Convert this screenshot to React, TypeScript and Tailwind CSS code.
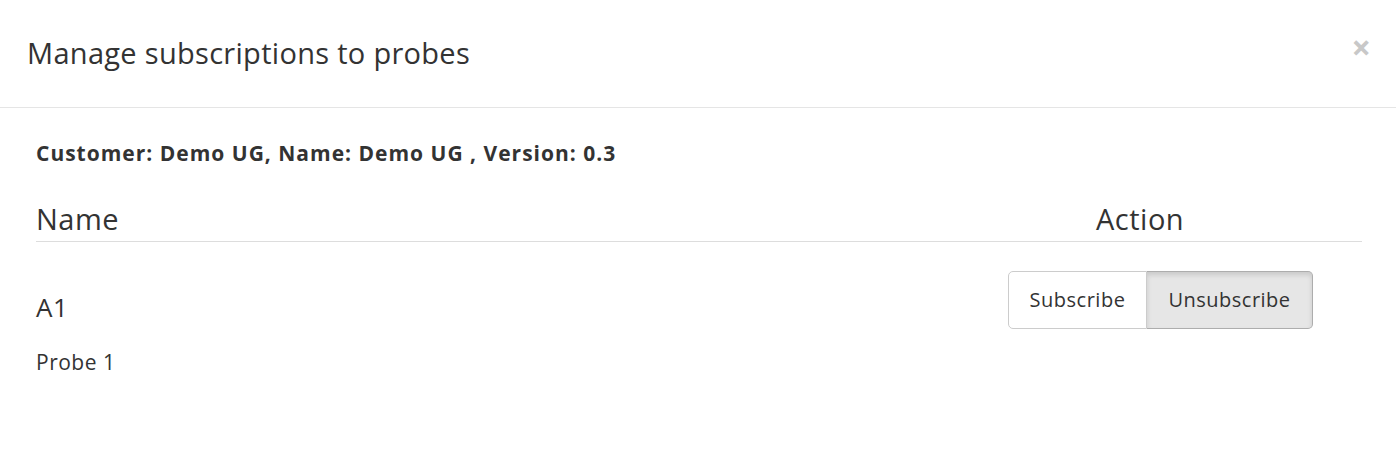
export default function App() {
  return (
    <div className="w-[1396px] h-[456px] bg-white text-[#333] font-['Open_Sans',sans-serif]">
      <div className="h-[108px] border-b border-[#e5e5e5] flex items-center justify-between pl-[27px] pr-[25px]">
        <h4 className="text-[29px] font-normal tracking-[0.3px] text-[#333] leading-none pb-[2px]">Manage subscriptions to probes</h4>
        <span className="text-[34px] font-bold text-[#c8c8c8] leading-none pb-[14px]">×</span>
      </div>
      <div className="pl-[36px] pr-[34px] pt-[35px]">
        <div className="text-[21px] font-bold tracking-[1px] leading-none text-[#333]">Customer: Demo UG, Name: Demo UG , Version: 0.3</div>
        <div className="mt-[40px] flex items-end border-b border-[#ddd] pb-[8px]">
          <div className="flex-1 text-[29px] font-normal tracking-[0.5px] leading-none">Name</div>
          <div className="w-[266px] text-[29px] font-normal tracking-[0.5px] leading-none">Action</div>
        </div>
        <div className="flex items-start pt-[29px]">
          <div className="flex-1">
            <div className="mt-[23px] text-[26px] font-normal tracking-[0.5px] leading-none">A1</div>
            <div className="mt-[32px] text-[21px] tracking-[0.5px] leading-none">Probe 1</div>
          </div>
          <div className="mr-[49px] flex font-['Open_Sans',sans-serif] text-[20px] tracking-[0.5px]">
            <button className="h-[58px] w-[139px] border border-[#ccc] rounded-l-[5px] bg-white text-[#333]">Subscribe</button>
            <button className="h-[58px] w-[166px] border border-l-0 border-[#adadad] rounded-r-[5px] bg-[#e6e6e6] text-[#333] shadow-[inset_0_3px_5px_rgba(0,0,0,0.125)]">Unsubscribe</button>
          </div>
        </div>
      </div>
    </div>
  );
}
